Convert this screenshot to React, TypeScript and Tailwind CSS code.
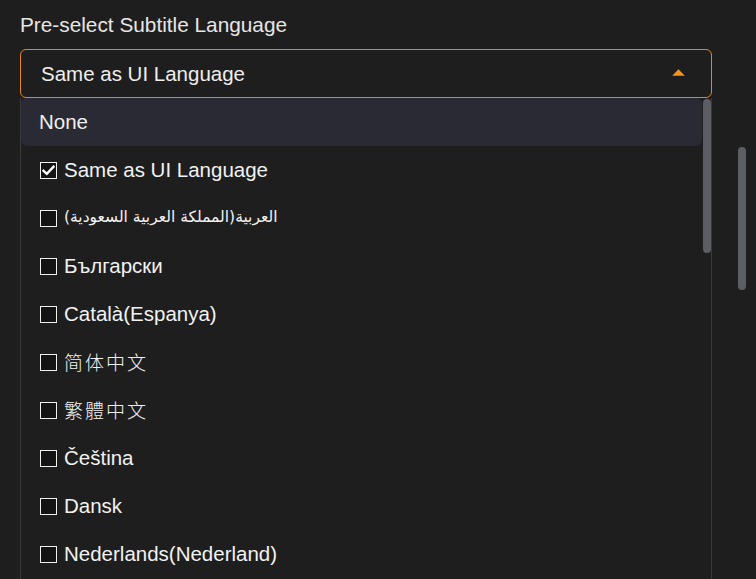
import React from "react";

const items: { label: string; checked?: boolean; rtl?: boolean; cjk?: string }[] = [
  { label: "Same as UI Language", checked: true },
  { label: "العربية(المملكة العربية السعودية)", rtl: true },
  { label: "Български" },
  { label: "Català(Espanya)" },
  { label: "简体中文", cjk: "sc" },
  { label: "繁體中文", cjk: "tc" },
  { label: "Čeština" },
  { label: "Dansk" },
  { label: "Nederlands(Nederland)" },
];

function Box({ checked }: { checked?: boolean }) {
  return (
    <span className="flex h-[17px] w-[17px] shrink-0 items-center justify-center border border-[#f0f0f0] bg-[#141414]">
      {checked && (
        <svg width="13" height="11" viewBox="0 0 13 11">
          <path d="M1.5 5.8 L4.8 8.8 L11.5 1.8" fill="none" stroke="#ffffff" strokeWidth="2.4" strokeLinecap="square" />
        </svg>
      )}
    </span>
  );
}

export default function App() {
  return (
    <div
      className="relative h-[579px] w-[756px] overflow-hidden bg-[#1e1e1e] pl-[20px] pt-[13px] text-[#ececec]"
      style={{ fontFamily: '"Liberation Sans", Arial, sans-serif' }}
    >
      <div className="h-[24px] text-[20.8px] leading-[24px] text-[#e6e6e6]">Pre-select Subtitle Language</div>
      <div className="mt-[12px] w-[692px]">
        <div className="flex h-[49px] items-center justify-between rounded-[6px] border border-[#e3851c] pl-[20px] pr-[26px] text-[20.5px]">
          <span className="pt-[1px] text-[#eeeeee]">Same as UI Language</span>
          <svg width="13" height="7" viewBox="0 0 13 7" className="mt-[-3px]">
            <path d="M6.5 0.3 L12.8 6.7 L0.2 6.7 Z" fill="#f3941a" />
          </svg>
        </div>
        <div className="relative h-[500px] border-x border-[#3a3a3c]">
          <div className="mr-[9px] flex h-[48px] items-center rounded-[6px] bg-[#2a2a35] pl-[18px] pt-[1px] text-[20.5px] text-[#f0f0f0]">
            None
          </div>
          {items.map((it) => (
            <div key={it.label} className="flex h-[48px] items-center gap-[7px] pl-[19px] text-[20.5px] text-[#f2f2f2]">
              <Box checked={it.checked} />
              {it.rtl ? (
                <bdi className="text-[15.5px]" style={{ fontFamily: '"DejaVu Sans", sans-serif' }}>{it.label}</bdi>
              ) : it.cjk ? (
                <span
                  className="text-[19px] font-light tracking-[2px]"
                  style={{ fontFamily: it.cjk === "sc" ? '"Noto Sans CJK SC", sans-serif' : '"Noto Sans CJK TC", sans-serif' }}
                >
                  {it.label}
                </span>
              ) : (
                <span className="pt-[1px]">{it.label}</span>
              )}
            </div>
          ))}
          <div className="absolute right-[0px] top-[1px] h-[154px] w-[8px] rounded-full bg-[#5d5e64]" />
        </div>
      </div>
      <div className="absolute left-[738px] top-[147px] h-[143px] w-[8px] rounded-full bg-[#5d5e64]" />
    </div>
  );
}
